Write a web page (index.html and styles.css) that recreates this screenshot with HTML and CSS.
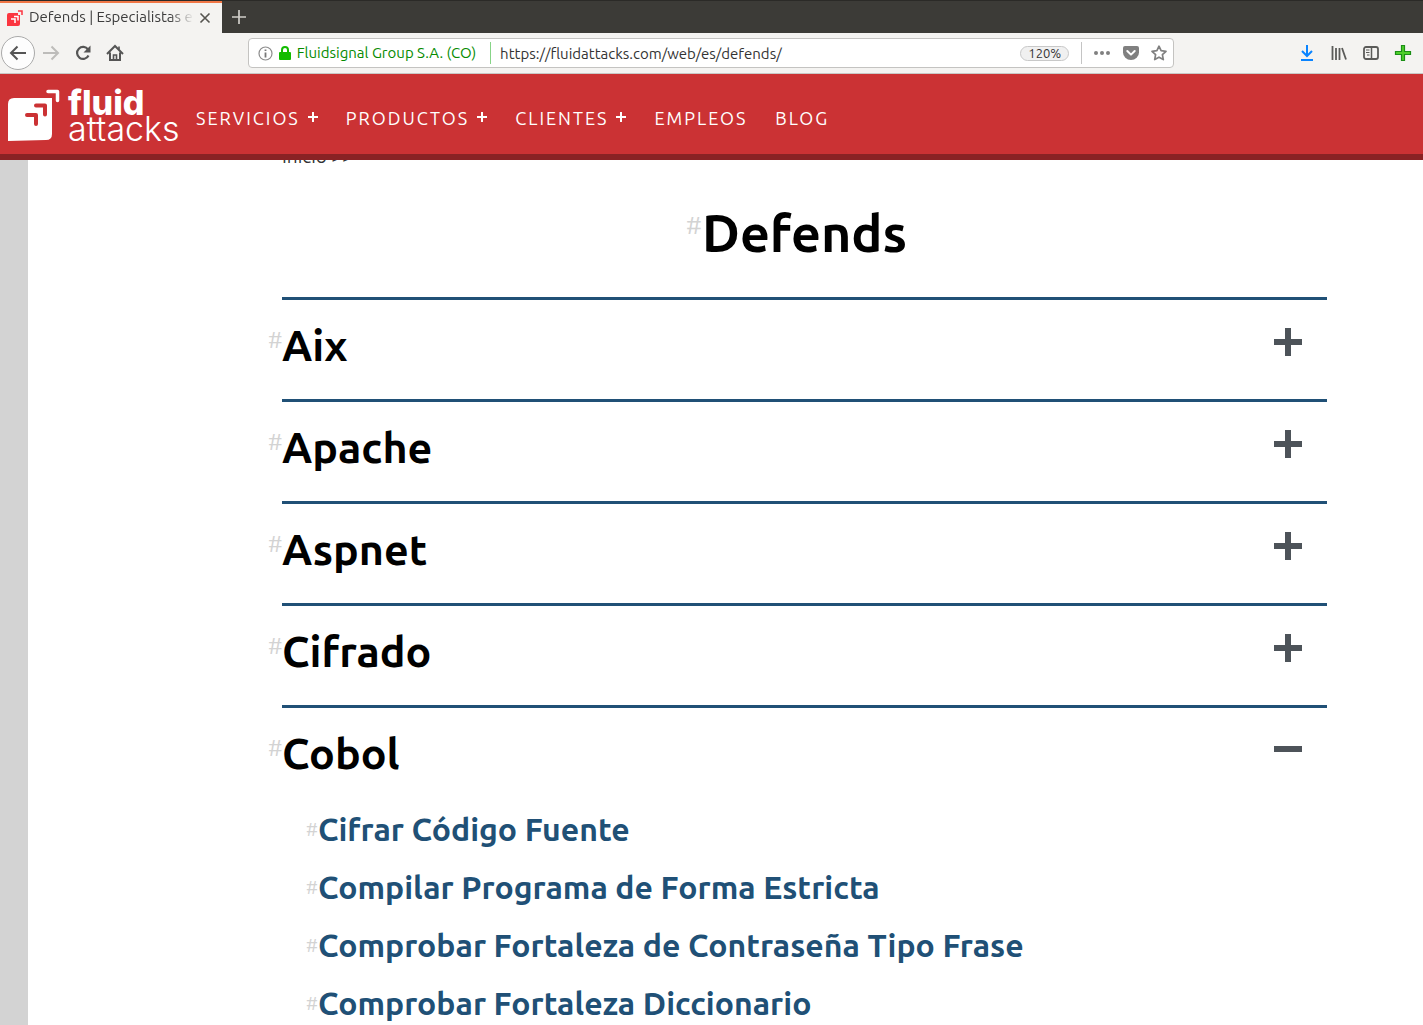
FILE: index.html
```html
<!DOCTYPE html>
<html lang="es">
<head>
<meta charset="utf-8">
<title>Defends | Especialistas en seguridad</title>
<link rel="stylesheet" href="styles.css">
</head>
<body>
<div class="tabs">
  <div class="tab">
    <svg class="favicon" width="18" height="18" viewBox="0 0 18 18"><path fill="#fb3640" d="M3 4h9v2h2v9q0 2-2 2H1V6q0-2 2-2z"/><path fill="none" stroke="#fb3640" stroke-width="1.5" d="M12 2h4v4"/><path fill="none" stroke="#fff" stroke-width="1.5" d="M8 7.500h4v4M5 10h4v4"/></svg>
    <span class="tab-title">Defends | Especialistas en</span>
    <button class="icon tab-close" aria-label="Cerrar"><svg width="12" height="12" viewBox="0 0 12 12"><path d="M1.500 1.500l9 9M10.500 1.500l-9 9" fill="none" stroke="#55544f" stroke-width="1.600"/></svg></button>
  </div>
  <button class="icon tab-new" aria-label="Nueva"><svg width="14" height="14" viewBox="0 0 14 14"><path d="M7 0v14M0 7h14" fill="none" stroke="#d0cec9" stroke-width="1.700"/></svg></button>
</div>
<div class="toolbar">
  <button class="icon tool back" aria-label="Atrás"><svg width="18" height="18" viewBox="0 0 18 18"><path d="M17 9H2M8.500 2.500L2 9l6.500 6.500" fill="none" stroke="#555" stroke-width="2"/></svg></button>
  <button class="icon tool" aria-label="Adelante"><svg width="18" height="18" viewBox="0 0 18 18"><path d="M1 9h15M9.500 2.500L16 9l-6.500 6.500" fill="none" stroke="#bdbcba" stroke-width="2"/></svg></button>
  <button class="icon tool" aria-label="Recargar"><svg width="18" height="18" viewBox="0 0 18 18"><path d="M14.500 11.500A6 6 0 1 1 14 5.500" fill="none" stroke="#555" stroke-width="2.200"/><path d="M16.500 1.500v7h-7z" fill="#555"/></svg></button>
  <button class="icon tool" aria-label="Inicio"><svg width="18" height="18" viewBox="0 0 18 18"><path d="M1 10l8-8 8 8M4 8.500V16h10V8.500" fill="none" stroke="#555" stroke-width="2"/><path d="M7.500 16v-5h3v5M13 2.500v3" fill="none" stroke="#555" stroke-width="1.600"/></svg></button>
  <div class="spring"></div>
  <div class="urlbar">
    <svg width="15" height="15" viewBox="0 0 15 15"><circle cx="7.500" cy="7.500" r="6.500" fill="none" stroke="#8c8c8c" stroke-width="1.200"/><path d="M7.500 6.500v5M7.500 3.500v1.600" stroke="#777" stroke-width="1.800"/></svg>
    <svg class="lock" width="12" height="14" viewBox="0 0 12 14"><rect y="6" width="12" height="8" rx="1" fill="#12bc00"/><path d="M3 7V4a3 3 0 0 1 6 0v3" fill="none" stroke="#12bc00" stroke-width="2"/></svg>
    <span class="owner">Fluidsignal Group S.A. (CO)</span>
    <input class="address" type="text" aria-label="Dirección" value="https://fluidattacks.com/web/es/defends/">
    <button class="zoom">120%</button>
    <span class="rule"></span>
    <button class="icon" aria-label="Más"><svg width="18" height="18" viewBox="0 0 18 18" fill="#808080"><circle cx="3" cy="9" r="2"/><circle cx="9" cy="9" r="2"/><circle cx="15" cy="9" r="2"/></svg></button>
    <button class="icon" aria-label="Pocket"><svg width="16" height="16" viewBox="0 0 16 16"><path d="M2 1h12q2 0 2 2v4.500a8 7.500 0 0 1-16 0V3q0-2 2-2z" fill="#808080"/><path d="M4.300 6L8 9.600 11.700 6" fill="none" stroke="#fff" stroke-width="2" stroke-linecap="round" stroke-linejoin="round"/></svg></button>
    <button class="icon" aria-label="Favorito"><svg width="16" height="16" viewBox="0 0 16 16"><path d="M8 1.200l2.100 4.500 4.900.6-3.600 3.400.9 4.900L8 12.200l-4.300 2.400.9-4.900L1 6.300l4.900-.6z" fill="none" stroke="#808080" stroke-width="1.700" stroke-linejoin="round"/></svg></button>
  </div>
  <div class="spring"></div>
  <button class="icon tool" aria-label="Descargas"><svg width="16" height="16" viewBox="0 0 16 16"><path d="M8 0v11M3 6l5 5 5-5M2 15h12" fill="none" stroke="#0a84ff" stroke-width="2"/></svg></button>
  <button class="icon tool" aria-label="Biblioteca"><svg width="16" height="16" viewBox="0 0 16 16"><path d="M1.500 1v14M5 3v12M8.500 3v12M11 3l4 11.500" fill="none" stroke="#5b5b59" stroke-width="1.800"/></svg></button>
  <button class="icon tool" aria-label="Barra lateral"><svg width="16" height="16" viewBox="0 0 16 16"><rect x="1" y="2" width="14" height="12" rx="2" fill="none" stroke="#5b5b59" stroke-width="1.800"/><path d="M8.500 2v12" stroke="#5b5b59" stroke-width="1.500"/><path d="M3 5h3.500M3 7.500h3.500M4 10h2.500" stroke="#5b5b59"/></svg></button>
  <button class="icon tool" aria-label="Añadir"><svg width="18" height="18" viewBox="0 0 18 18"><path d="M7.500 1.500h3v6h6v3h-6v6h-3v-6h-6v-3h6z" fill="#4fcf2a" stroke="#1b8f16" stroke-width="1.200"/></svg></button>
</div>
<header class="site-header">
  <a class="logo" href="#inicio" aria-label="Fluid Attacks">
    <svg width="52" height="54" viewBox="0 0 52 54"><path fill="#fff" d="M6 10h38v36q0 6-6 6L0 53V16q0-6 6-6z"/><path fill="none" stroke="#fff" stroke-width="3.500" stroke-linejoin="round" stroke-linecap="round" d="M40 3.500h9.500v9"/><path fill="none" stroke="#cb3234" stroke-width="4" stroke-linejoin="round" stroke-linecap="round" d="M28 17.500h9v9M19 27h9v9"/></svg>
    <span class="logo-text"><b>fluid</b><span>attacks</span></span>
  </a>
  <nav class="menu">
    <a href="#servicios">SERVICIOS <svg width="10" height="10" viewBox="0 0 10 10"><path d="M5 0v10M0 5h10"/></svg></a>
    <a href="#productos">PRODUCTOS <svg width="10" height="10" viewBox="0 0 10 10"><path d="M5 0v10M0 5h10"/></svg></a>
    <a href="#clientes">CLIENTES <svg width="10" height="10" viewBox="0 0 10 10"><path d="M5 0v10M0 5h10"/></svg></a>
    <a href="#empleos">EMPLEOS</a>
    <a href="#blog">BLOG</a>
  </nav>
</header>
<main class="page">
  <div class="crumbs"><a href="#inicio">Inicio &gt;&gt;</a></div>
  <h1 class="title"><span class="hash">#</span>Defends</h1>
  <details class="group"><summary><span class="hash">#</span><h2>Aix</h2><svg class="sign" width="28" height="28" viewBox="0 0 28 28"><path d="M14 0v28M0 14h28"/></svg></summary></details>
  <details class="group"><summary><span class="hash">#</span><h2>Apache</h2><svg class="sign" width="28" height="28" viewBox="0 0 28 28"><path d="M14 0v28M0 14h28"/></svg></summary></details>
  <details class="group"><summary><span class="hash">#</span><h2>Aspnet</h2><svg class="sign" width="28" height="28" viewBox="0 0 28 28"><path d="M14 0v28M0 14h28"/></svg></summary></details>
  <details class="group"><summary><span class="hash">#</span><h2>Cifrado</h2><svg class="sign" width="28" height="28" viewBox="0 0 28 28"><path d="M14 0v28M0 14h28"/></svg></summary></details>
  <details class="group" open><summary><span class="hash">#</span><h2>Cobol</h2><svg class="sign" width="28" height="28" viewBox="0 0 28 28"><path d="M0 13h28"/></svg></summary>
    <ul class="entries">
      <li><span class="hash">#</span><a href="#cifrar">Cifrar Código Fuente</a></li>
      <li><span class="hash">#</span><a href="#compilar">Compilar Programa de Forma Estricta</a></li>
      <li><span class="hash">#</span><a href="#frase">Comprobar Fortaleza de Contraseña Tipo Frase</a></li>
      <li><span class="hash">#</span><a href="#diccionario">Comprobar Fortaleza Diccionario</a></li>
    </ul>
  </details>
</main>
</body>
</html>
```
FILE: styles.css
```css
* { box-sizing: border-box; }
body {
  margin: 0;
  height: 100vh;
  display: flex;
  flex-direction: column;
  overflow: hidden;
  background: #fff;
  color: #000;
  font-family: Ubuntu, "Noto Sans", sans-serif;
}
a { color: inherit; text-decoration: none; }
svg { display: block; flex: none; }
button { font: inherit; padding: 0; border: 0; background: none; }
.icon { display: flex; align-items: center; justify-content: center; flex: none; }

/* Browser tabs and toolbar */
.tabs {
  display: flex;
  flex: none;
  height: 33px;
  background: #3c3b37;
  border-top: 1px solid #2b2a27;
}
.tab {
  display: flex;
  align-items: center;
  width: 222px;
  padding: 0 10px 0 6px;
  border-top: 2px solid #f07746;
  background: #f4f3f1;
}
.tab-title {
  flex: 1;
  margin-left: 5px;
  overflow: hidden;
  white-space: nowrap;
  font-size: 15px;
  line-height: 20px;
  padding-bottom: 2px;
  color: #3c3c3c;
  mask-image: linear-gradient(to right, #000 85%, transparent);
}
.tab-close { width: 14px; margin-left: 4px; }
.tab-new { width: 34px; }
.toolbar {
  display: flex;
  align-items: center;
  flex: none;
  height: 41px;
  padding: 0 4px 0 1px;
  background: #f4f3f1;
  border-bottom: 1px solid #c9c8c6;
}
.tool { width: 32px; height: 32px; }
.back { width: 34px; height: 34px; border: 1px solid #aaa; border-radius: 50%; background: #fdfdfd; }
.spring { flex: 1; }
.urlbar {
  display: flex;
  align-items: center;
  flex: 8;
  height: 30px;
  margin: 0 3px;
  padding: 0 6px 0 9px;
  background: #fff;
  border: 1px solid #c4c3c1;
  border-radius: 4px;
  font-size: 15px;
}
.lock { margin: 0 6px; }
.owner { color: #058b00; padding-right: 14px; border-right: 1px solid #87d487; line-height: 22px; white-space: nowrap; }
.address {
  flex: 1;
  min-width: 0;
  padding: 0 0 0 9px;
  border: 0;
  background: none;
  font: inherit;
  color: #333;
}
.zoom { width: 49px; height: 15px; border: 1px solid #c8c8c8; border-radius: 8px; background: #f0f0f0; font-size: 13px; line-height: 13px; color: #333; }
.rule { width: 1px; height: 22px; margin: 0 11px 0 12px; background: #c4c4c4; }
.urlbar .icon + .icon { margin-left: 12px; }

/* Site header */
.site-header {
  display: flex;
  flex: none;
  height: 86px;
  padding-left: 8px;
  background: #cb3234;
  border-bottom: 6px solid #892224;
  color: #fff;
}
.logo { display: flex; gap: 8px; width: 188px; padding-top: 14px; }
.logo-text { display: flex; flex-direction: column; padding-top: 2px; font: 300 34px/26px Inter, sans-serif; }
.logo-text b { font-weight: 800; }
.menu { display: flex; align-items: center; gap: 28px; padding-top: 8px; font-size: 18px; letter-spacing: 2px; }
.menu a { display: flex; align-items: center; gap: 8px; }
.menu svg { margin-bottom: 2px; }
.menu path { stroke: #fff; stroke-width: 2; }

/* Page */
.page { flex: 1; min-height: 0; overflow: hidden; padding: 0 96px 0 254px; border-left: 28px solid #d3d3d3; }
.crumbs { height: 24px; margin-top: -16px; font-size: 19px; line-height: 24px; color: #333; }
.hash { flex: none; color: #d3d3d3; font-weight: 400; }
.title {
  display: flex;
  align-items: center;
  justify-content: center;
  height: 129px;
  margin: 0;
  font-size: 52px;
  font-weight: 600;
}
.title .hash { width: 16px; margin-left: -16px; font-size: 24px; padding-bottom: 14px; }
.group { border-top: 3px solid #205076; padding-bottom: 7px; }
.group summary { display: flex; align-items: center; height: 92px; list-style: none; }
.group summary .hash { width: 14px; margin-left: -14px; padding-bottom: 14px; font-size: 22px; }
.group h2 { flex: 1; margin: 0; padding-bottom: 2px; font-size: 43px; font-weight: 600; }
.sign { margin: 0 25px 8px 0; }
.sign path { stroke: #4d5359; stroke-width: 6; }
.entries { margin: 0; padding: 0 0 0 24px; list-style: none; }
.entries li { display: flex; align-items: center; height: 58px; font-size: 32px; font-weight: 600; color: #205076; white-space: nowrap; }
.entries .hash { width: 12px; font-size: 18px; }
```
